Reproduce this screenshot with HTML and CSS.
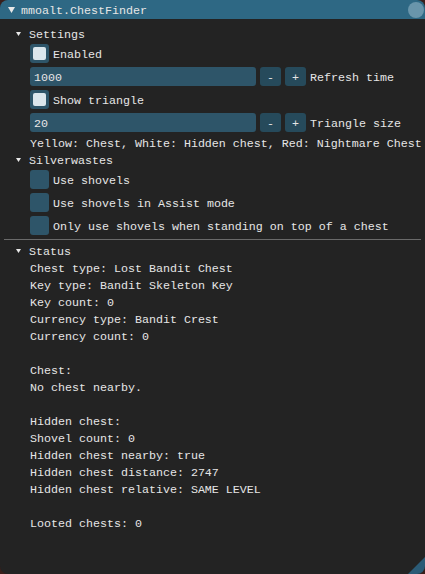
FILE: index.html
```html
<!DOCTYPE html>
<html>
<head>
<meta charset="utf-8">
<link rel="stylesheet" href="styles.css">
</head>
<body>
<div class="window">
  <div class="titlebar">
    <svg class="tri-title" width="7" height="6" viewBox="0 0 7 6"><polygon points="0,0 7,0 3.5,6" fill="#e8e8e8"/></svg>
    <span class="title">mmoalt.ChestFinder</span>
    <span class="close"></span>
  </div>
  <div class="content">
    <div class="node"><svg class="arrow" width="5" height="4" viewBox="0 0 5 4"><polygon points="0,0 5,0 2.5,4" fill="#e8e8e8"/></svg><span class="nlbl">Settings</span></div>
    <div class="children">
      <div class="row"><span class="check on"><span></span></span><span class="lbl">Enabled</span></div>
      <div class="row"><span class="input">1000</span><span class="btn">-</span><span class="btn">+</span><span class="lbl">Refresh time</span></div>
      <div class="row"><span class="check on"><span></span></span><span class="lbl">Show triangle</span></div>
      <div class="row"><span class="input">20</span><span class="btn">-</span><span class="btn">+</span><span class="lbl">Triangle size</span></div>
      <div class="text">Yellow: Chest, White: Hidden chest, Red: Nightmare Chest</div>
    </div>
    <div class="node"><svg class="arrow" width="5" height="4" viewBox="0 0 5 4"><polygon points="0,0 5,0 2.5,4" fill="#e8e8e8"/></svg><span class="nlbl">Silverwastes</span></div>
    <div class="children">
      <div class="row"><span class="check"></span><span class="lbl">Use shovels</span></div>
      <div class="row"><span class="check"></span><span class="lbl">Use shovels in Assist mode</span></div>
      <div class="row"><span class="check"></span><span class="lbl">Only use shovels when standing on top of a chest</span></div>
    </div>
    <div class="sep"></div>
    <div class="node"><svg class="arrow" width="5" height="4" viewBox="0 0 5 4"><polygon points="0,0 5,0 2.5,4" fill="#e8e8e8"/></svg><span class="nlbl">Status</span></div>
    <div class="children">
      <div class="text">Chest type: Lost Bandit Chest</div>
      <div class="text">Key type: Bandit Skeleton Key</div>
      <div class="text">Key count: 0</div>
      <div class="text">Currency type: Bandit Crest</div>
      <div class="text">Currency count: 0</div>
      <div class="text"></div>
      <div class="text">Chest:</div>
      <div class="text">No chest nearby.</div>
      <div class="text"></div>
      <div class="text">Hidden chest:</div>
      <div class="text">Shovel count: 0</div>
      <div class="text">Hidden chest nearby: true</div>
      <div class="text">Hidden chest distance: 2747</div>
      <div class="text">Hidden chest relative: SAME LEVEL</div>
      <div class="text"></div>
      <div class="text">Looted chests: 0</div>
    </div>
  </div>
  <svg class="grip" width="17" height="17" viewBox="0 0 17 17"><polygon points="17,0 17,17 0,17" fill="#2b5b76"/></svg>
</div>
</body>
</html>
```
FILE: styles.css
```css
html, body {
  margin: 0;
  padding: 0;
  background: #3a1f1b;
}
body {
  width: 425px;
  height: 574px;
  overflow: hidden;
  font-family: "Liberation Mono", "DejaVu Sans Mono", monospace;
  font-size: 11.66px;
  color: #e6e6e6;
}
.window {
  position: relative;
  width: 425px;
  height: 574px;
  background: #232323;
  border-radius: 8px;
  overflow: hidden;
}
.titlebar {
  position: relative;
  height: 19px;
  background: #2e6884;
  display: flex;
  align-items: center;
  padding-left: 8px;
}
.tri-title {
  display: block;
  margin-right: 6px;
}
.title {
  height: 13px;
  line-height: 16px;
  white-space: pre;
}
.close {
  position: absolute;
  right: 1px;
  top: 2px;
  width: 16px;
  height: 16px;
  border-radius: 50%;
  background: #6995ab;
}
.content {
  padding: 8px 4px 0 4px;
  display: flex;
  flex-direction: column;
  gap: 4px;
}
.node {
  height: 13px;
  display: flex;
  align-items: flex-start;
  padding-left: 12px;
  white-space: pre;
}
.arrow {
  display: block;
  margin-top: 5px;
  margin-right: 8px;
}
.nlbl {
  height: 13px;
  line-height: 16px;
}
.children {
  padding-left: 26px;
  display: flex;
  flex-direction: column;
  gap: 4px;
}
.row {
  height: 19px;
  display: flex;
  align-items: center;
  white-space: pre;
}
.check {
  width: 19px;
  height: 19px;
  box-sizing: border-box;
  border-radius: 3px;
  background: #2e5569;
  padding: 3px;
  display: block;
}
.check.on span {
  display: block;
  width: 13px;
  height: 13px;
  border-radius: 2px;
  background: #dbe6ec;
}
.lbl {
  margin-left: 4px;
  height: 13px;
  line-height: 16px;
}
.input {
  width: 226px;
  height: 19px;
  box-sizing: border-box;
  background: #2e5569;
  border-radius: 3px;
  padding-left: 4px;
  line-height: 22px;
}
.btn {
  width: 21px;
  height: 19px;
  margin-left: 4px;
  border-radius: 3px;
  background: #264a5b;
  text-align: center;
  line-height: 22px;
}
.text {
  height: 13px;
  line-height: 16px;
  white-space: pre;
}
.sep {
  height: 1px;
  background: #6a6a6a;
}
.grip {
  position: absolute;
  right: 0;
  bottom: 0;
  display: block;
}
```
